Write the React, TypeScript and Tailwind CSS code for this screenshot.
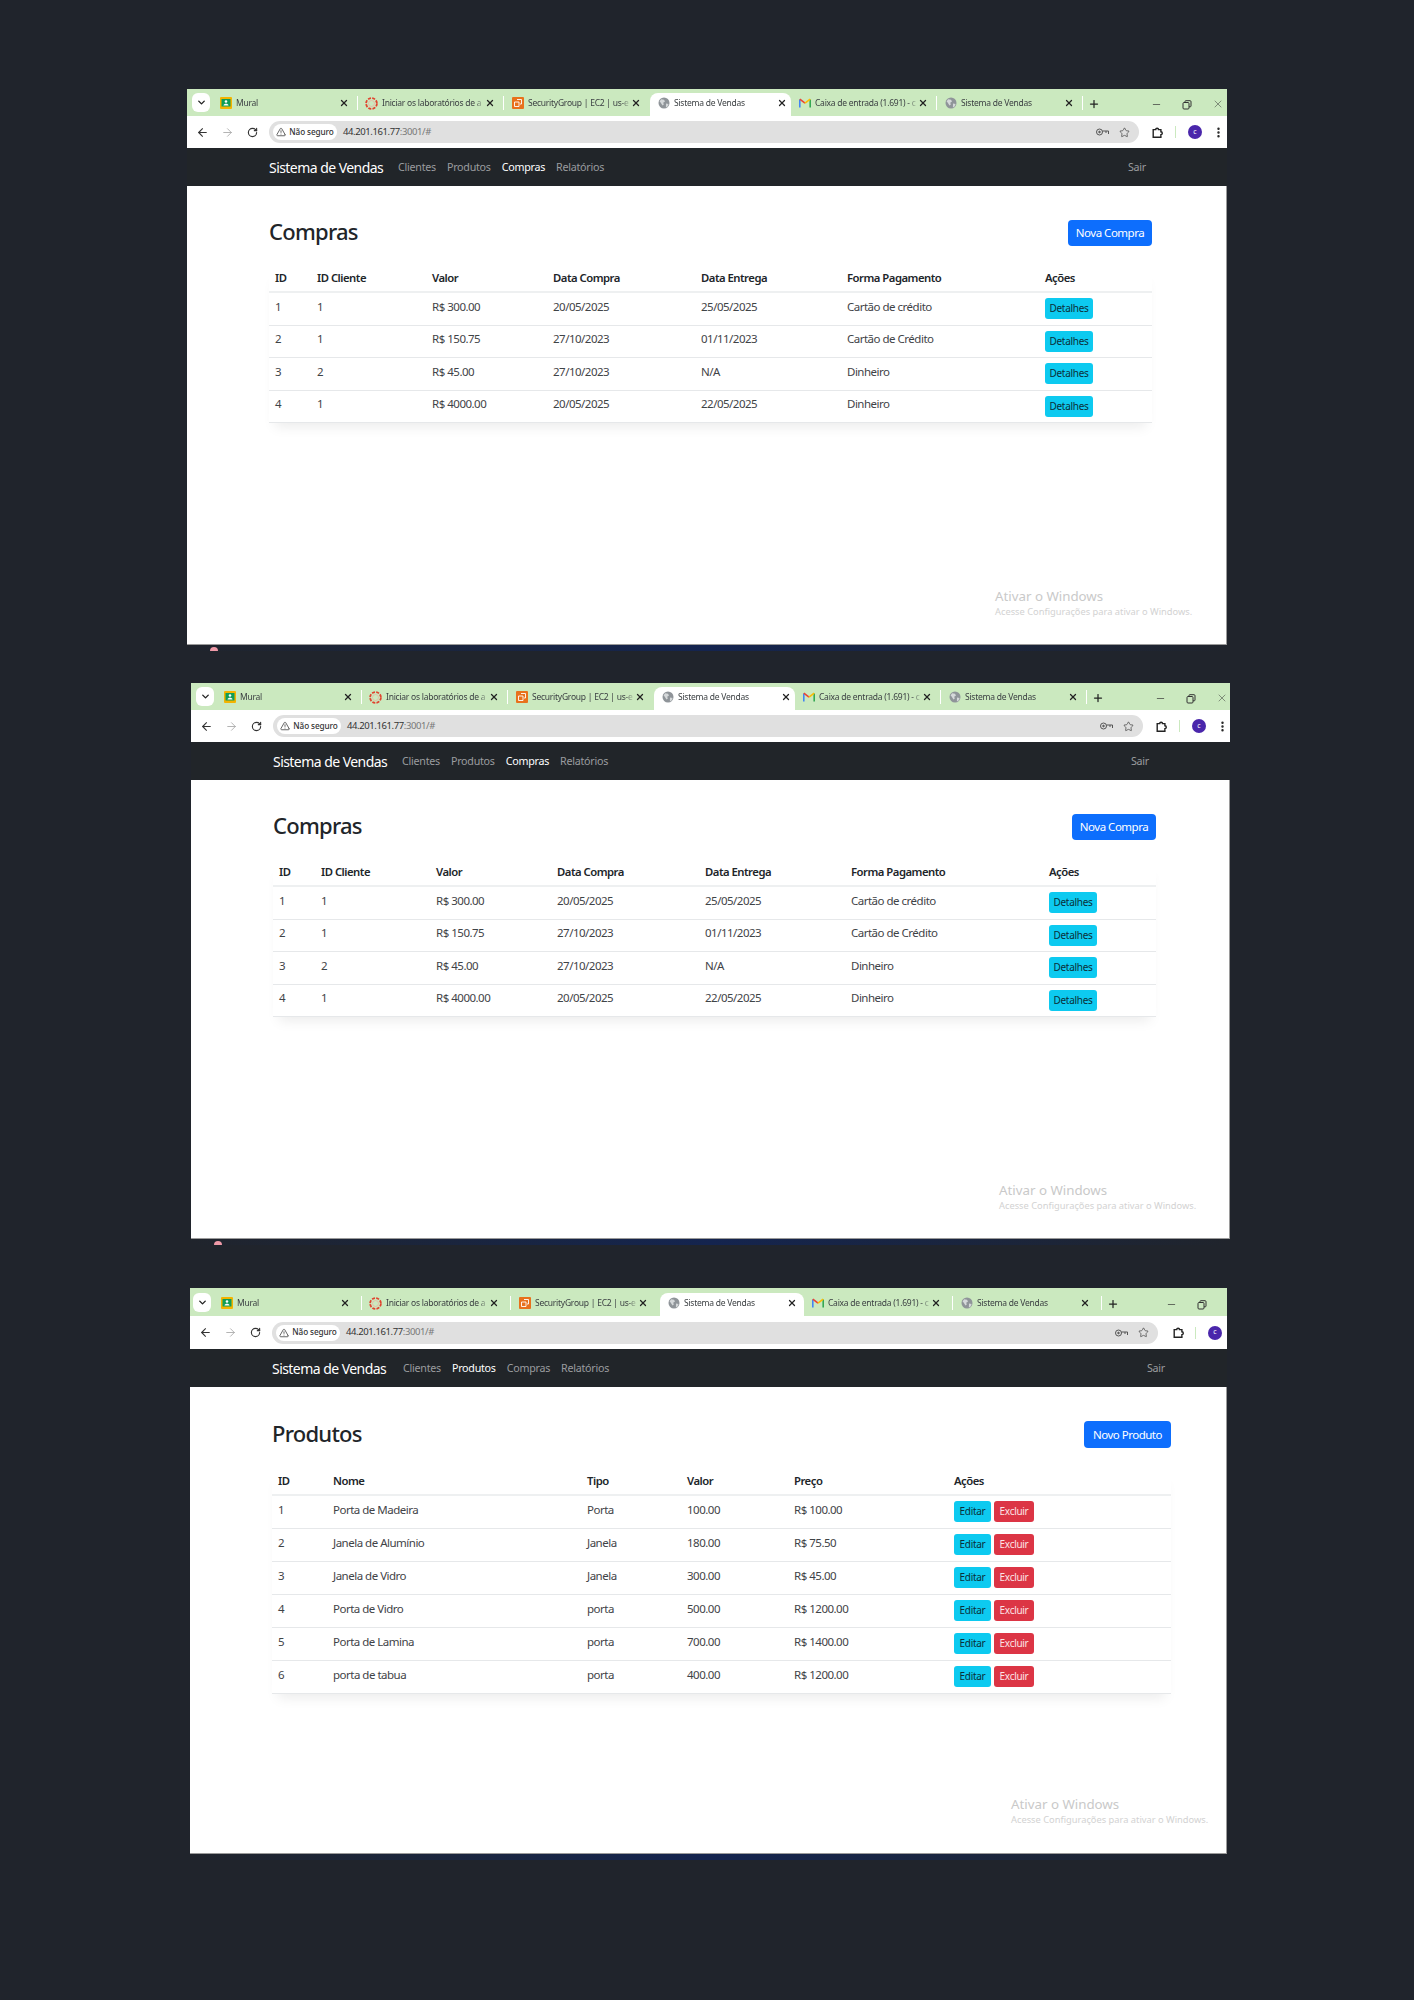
import React from 'react';
import { ArrowLeft, ArrowRight, RotateCw, TriangleAlert, Star, EllipsisVertical, ChevronDown, X, Plus, Minus } from 'lucide-react';

type Favicon = 'classroom' | 'canvas' | 'aws' | 'globe' | 'gmail';

const TabIcon: React.FC<{ kind: Favicon }> = ({ kind }) => {
    if (kind === 'classroom') {
        return (
            <svg width="12" height="12" viewBox="0 0 12 12">
                <rect width="12" height="12" rx="1" fill="#f4b400" />
                <rect x="1.5" y="2" width="9" height="7.5" fill="#0f9d58" />
                <circle cx="6" cy="4.5" r="1.3" fill="#fff" />
                <path d="M3.5 8.5c0-2.4 5-2.4 5 0z" fill="#fff" />
            </svg>
        );
    }
    if (kind === 'canvas') {
        return (
            <svg width="13" height="13" viewBox="0 0 13 13" fill="none">
                <circle cx="6.5" cy="6.5" r="5.4" stroke="#e0442f" strokeWidth="1.8" strokeDasharray="3 1.25" />
                <circle cx="6.5" cy="6.5" r="3" stroke="#f2a59b" strokeWidth="0.6" />
            </svg>
        );
    }
    if (kind === 'aws') {
        return (
            <svg width="12" height="12" viewBox="0 0 12 12" fill="none">
                <rect width="12" height="12" rx="1" fill="#e8711c" />
                <path d="M5 2.5h4.5v4.5H8M2.5 5H7v4.5H2.5z" stroke="#fff" strokeWidth="0.9" />
            </svg>
        );
    }
    if (kind === 'gmail') {
        return (
            <svg width="12" height="10" viewBox="0 0 12 10" fill="none">
                <path d="M0.8 9.5V1.5" stroke="#4285f4" strokeWidth="1.6" />
                <path d="M11.2 9.5V1.5" stroke="#34a853" strokeWidth="1.6" />
                <path d="M0.8 1.2L6 5.2" stroke="#ea4335" strokeWidth="1.6" />
                <path d="M6 5.2L11.2 1.2" stroke="#fbbc04" strokeWidth="1.6" />
            </svg>
        );
    }
    return (
        <svg width="12" height="12" viewBox="0 0 12 12">
            <circle cx="6" cy="6" r="5.5" fill="#8f9499" />
            <path d="M3 2.2l3 .6 1 1.6-1.8 1.4.6 1.8-1.3.8L2.6 5.6 1.6 4.4zM8 6.5l2.6.4-1 2.6-1.7 1z" fill="#d5d8da" />
        </svg>
    );
};

const TABS: { icon: Favicon; title: string }[] = [
    { icon: 'classroom', title: 'Mural' },
    { icon: 'canvas', title: 'Iniciar os laboratórios de a' },
    { icon: 'aws', title: 'SecurityGroup | EC2 | us-e' },
    { icon: 'globe', title: 'Sistema de Vendas' },
    { icon: 'gmail', title: 'Caixa de entrada (1.691) - c' },
    { icon: 'globe', title: 'Sistema de Vendas' },
];

const TabStrip: React.FC<{ wide: boolean }> = ({ wide }) => (
    <div className={`flex items-end bg-[#cbe9bf] ${wide ? 'h-[28px] pl-[3px]' : 'h-[27px] pl-[5px]'}`}>
        <div className="mb-[4px] mr-[2px] flex h-[19px] w-[18px] items-center justify-center rounded-[6px] bg-white">
            <ChevronDown size={11} strokeWidth={3} color="#222" />
        </div>
        {TABS.map((tab, i) => {
            const active = i === 3;
            return (
                <div
                    key={i}
                    className={`flex h-[23px] items-center pb-[3px] pl-[7px] ${active ? 'rounded-t-[8px] bg-white' : ''} ${
                        wide ? (active ? 'w-[144px]' : 'w-[149px]') : active ? 'w-[141px]' : 'w-[146px]'
                    }`}
                >
                    <div className="flex w-[13px] shrink-0 justify-center">
                        <TabIcon kind={tab.icon} />
                    </div>
                    <span className="ml-[4px] w-[103px] shrink-0 overflow-hidden whitespace-nowrap text-[8.5px] tracking-[-0.25px] text-[#3c4043] [mask-image:linear-gradient(to_right,black_90%,transparent)]">
                        {tab.title}
                    </span>
                    <X size={10} strokeWidth={3} color="#222" className="shrink-0" />
                    {!active && i !== 2 && <div className="ml-auto h-[14px] w-[1px] bg-white" />}
                </div>
            );
        })}
        <div className="mb-[6px] ml-[5px] flex w-[12px] justify-center">
            <Plus size={12} strokeWidth={2.5} color="#222" />
        </div>
        <div className={`mb-[6px] flex w-[12px] justify-center ${wide ? 'ml-[46px]' : 'ml-[50px]'}`}>
            <Minus size={11} strokeWidth={1.5} color="#333" />
        </div>
        <div className="mb-[6px] ml-[19px] flex w-[12px] justify-center">
            <svg width="10" height="10" viewBox="0 0 10 10" fill="none" stroke="#333">
                <rect x="1" y="2.5" width="6" height="6.5" rx="1" />
                <path d="M3 2.5V1.5a.8.8 0 0 1 .8-.8H8a1 1 0 0 1 1 1V6a.8.8 0 0 1-.8.8H7" />
            </svg>
        </div>
        {!wide && (
            <div className="mb-[6px] ml-[19px] flex w-[12px] justify-center">
                <X size={12} strokeWidth={1} color="#333" />
            </div>
        )}
    </div>
);

const Toolbar: React.FC<{ wide: boolean }> = ({ wide }) => (
    <div className={`flex items-center bg-white pl-[3px] ${wide ? 'h-[33px]' : 'h-[32px]'}`}>
        <div className="flex w-[24px] justify-center">
            <ArrowLeft size={13} strokeWidth={2} color="#333" />
        </div>
        <div className="ml-[1px] flex w-[24px] justify-center">
            <ArrowRight size={13} strokeWidth={1.5} color="#a3a3a3" />
        </div>
        <div className="ml-[1px] flex w-[24px] justify-center">
            <RotateCw size={11} strokeWidth={2.5} color="#333" />
        </div>
        <div className={`ml-[5px] flex h-[22px] items-center justify-between rounded-full bg-[#e0e0e0] pl-[4px] pr-[9px] ${wide ? 'w-[886px]' : 'w-[870px]'}`}>
            <div className="flex items-center">
                <div className="flex h-[16px] w-[64px] items-center justify-center gap-[3px] rounded-full bg-white">
                    <TriangleAlert size={10} strokeWidth={1.8} color="#333" />
                    <span className="text-[8.2px] font-medium tracking-[-0.1px] text-[#333]">Não seguro</span>
                </div>
                <span className="ml-[6px] text-[9.5px] tracking-[-0.4px] text-[#333]">
                    44.201.161.77<span className="text-[#777]">:3001/#</span>
                </span>
            </div>
            <div className="flex items-center gap-[10px]">
                <svg width="13" height="8" viewBox="0 0 13 8" fill="none" stroke="#555" strokeWidth="1">
                    <circle cx="3.5" cy="4" r="3" />
                    <circle cx="3.5" cy="4" r="0.8" fill="#555" />
                    <path d="M6.5 3h6v3M10 3v2" />
                </svg>
                <Star size={11} strokeWidth={1.6} color="#444" />
            </div>
        </div>
        <div className={`flex w-[24px] justify-center ${wide ? 'ml-[8px]' : 'ml-[6px]'}`}>
            <svg width="13" height="13" viewBox="0 0 13 13" fill="none" stroke="#222" strokeWidth="1.4">
                <path d="M2.2 3.6h2.5a1.4 1.4 0 1 1 2.8 0h2.4v2.2a1.4 1.4 0 1 1 0 2.8v2.7H2.2z" />
            </svg>
        </div>
        <div className={`h-[12px] w-[1px] bg-[#cbe9bf] ${wide ? 'ml-[5px]' : 'ml-[6px]'}`} />
        <div className="ml-[12px] flex h-[14px] w-[14px] items-center justify-center rounded-full bg-[#4a26ab] text-[7px] text-white">c</div>
        {!wide && <EllipsisVertical size={13} strokeWidth={2.5} color="#222" className="ml-[10px]" />}
    </div>
);

const Navbar: React.FC<{ active: string; wide: boolean }> = ({ active, wide }) => (
    <div className={`flex h-[38px] items-center justify-between bg-[#212529] pl-[82px] pt-[1px] ${wide ? 'pr-[62px]' : 'pr-[81px]'}`}>
        <div className="flex items-center">
            <span className={`whitespace-nowrap text-[14px] tracking-[-0.55px] text-white ${wide ? 'w-[131px]' : 'w-[129px]'}`}>Sistema de Vendas</span>
            <div className="flex items-center gap-[11px] text-[10.7px] tracking-[-0.25px]">
                {['Clientes', 'Produtos', 'Compras', 'Relatórios'].map(link => (
                    <span key={link} className={link === active ? 'text-white' : 'text-[#9a9c9f]'}>
                        {link}
                    </span>
                ))}
            </div>
        </div>
        <span className="text-[10.7px] tracking-[-0.25px] text-[#9a9c9f]">Sair</span>
    </div>
);

const BTN = 'inline-flex h-[21px] items-center justify-center rounded-[3px] text-[10px] tracking-[-0.3px]';

const ActivationNotice: React.FC<{ wide: boolean }> = ({ wide }) => (
    <div className={`absolute text-[#c9c9c9] ${wide ? 'left-[821px] top-[408px]' : 'left-[808px] top-[401px]'}`}>
        <p className="text-[13.3px] leading-[18px]">Ativar o Windows</p>
        <p className="text-[9.3px] leading-[14px] text-[#d2d2d2]">Acesse Configurações para ativar o Windows.</p>
    </div>
);

const COMPRAS = [
    ['1', '1', 'R$ 300.00', '20/05/2025', '25/05/2025', 'Cartão de crédito'],
    ['2', '1', 'R$ 150.75', '27/10/2023', '01/11/2023', 'Cartão de Crédito'],
    ['3', '2', 'R$ 45.00', '27/10/2023', 'N/A', 'Dinheiro'],
    ['4', '1', 'R$ 4000.00', '20/05/2025', '22/05/2025', 'Dinheiro'],
];

const PRODUTOS = [
    ['1', 'Porta de Madeira', 'Porta', '100.00', 'R$ 100.00'],
    ['2', 'Janela de Alumínio', 'Janela', '180.00', 'R$ 75.50'],
    ['3', 'Janela de Vidro', 'Janela', '300.00', 'R$ 45.00'],
    ['4', 'Porta de Vidro', 'porta', '500.00', 'R$ 1200.00'],
    ['5', 'Porta de Lamina', 'porta', '700.00', 'R$ 1400.00'],
    ['6', 'porta de tabua', 'porta', '400.00', 'R$ 1200.00'],
];

const TH = 'border-b-2 border-[#eef0f1] px-[6px] text-left align-middle text-[11.3px] font-semibold tracking-[-0.5px] text-[#212529]';
const TD = 'border-b border-[#e6e8ea] px-[6px] align-middle text-[11.5px] tracking-[-0.5px] text-[#3f4347]';
const TABLE_SHADOW = 'shadow-[0_10px_12px_-6px_rgba(0,0,0,0.08)]';

const PageHeader: React.FC<{ title: string; action: string; wide: boolean }> = ({ title, action, wide }) => (
    <div className={`mb-[20px] flex items-center justify-between ${wide ? 'h-[27px]' : 'h-[26px]'}`}>
        <h2 className="mb-[4px] text-[22px] font-medium leading-[22px] tracking-[-0.75px] text-[#212529]">{title}</h2>
        <button className={`rounded-[4px] bg-[#0d6efd] text-[11.5px] tracking-[-0.5px] text-white ${wide ? 'w-[87px]' : 'w-[84px]'} h-full`}>{action}</button>
    </div>
);

const ComprasPage: React.FC = () => (
    <div className="w-[883px]">
        <PageHeader title="Compras" action="Nova Compra" wide={false} />
        <table className={`w-[883px] table-fixed border-collapse ${TABLE_SHADOW}`}>
            <thead>
                <tr className="h-[26px]">
                    <th className={`${TH} w-[42px]`}>ID</th>
                    <th className={`${TH} w-[115px]`}>ID Cliente</th>
                    <th className={`${TH} w-[121px]`}>Valor</th>
                    <th className={`${TH} w-[148px]`}>Data Compra</th>
                    <th className={`${TH} w-[146px]`}>Data Entrega</th>
                    <th className={`${TH} w-[198px]`}>Forma Pagamento</th>
                    <th className={`${TH} w-[113px]`}>Ações</th>
                </tr>
            </thead>
            <tbody>
                {COMPRAS.map((row, index) => (
                    <tr key={row[0]} className={index % 2 === 0 ? 'h-[33px]' : 'h-[32px]'}>
                        {row.map((cell, i) => (
                            <td key={i} className={TD}>
                                <span className="relative -top-[2px]">{cell}</span>
                            </td>
                        ))}
                        <td className={TD}>
                            <button className={`${BTN} w-[48px] bg-[#0dcaf0] text-[#0b2f38]`}>Detalhes</button>
                        </td>
                    </tr>
                ))}
            </tbody>
        </table>
    </div>
);

const ProdutosPage: React.FC = () => (
    <div className="w-[899px]">
        <PageHeader title="Produtos" action="Novo Produto" wide={true} />
        <table className={`w-[899px] table-fixed border-collapse ${TABLE_SHADOW}`}>
            <thead>
                <tr className="h-[27px]">
                    <th className={`${TH} w-[55px]`}>ID</th>
                    <th className={`${TH} w-[254px]`}>Nome</th>
                    <th className={`${TH} w-[100px]`}>Tipo</th>
                    <th className={`${TH} w-[107px]`}>Valor</th>
                    <th className={`${TH} w-[160px]`}>Preço</th>
                    <th className={`${TH} w-[223px]`}>Ações</th>
                </tr>
            </thead>
            <tbody>
                {PRODUTOS.map(row => (
                    <tr key={row[0]} className="h-[33px]">
                        {row.map((cell, i) => (
                            <td key={i} className={TD}>
                                <span className="relative -top-[2px]">{cell}</span>
                            </td>
                        ))}
                        <td className={TD}>
                            <div className="flex gap-[3px]">
                                <button className={`${BTN} w-[37px] bg-[#0dcaf0] text-[#0b2f38]`}>Editar</button>
                                <button className={`${BTN} w-[40px] bg-[#dc3545] text-[#fbe4e6]`}>Excluir</button>
                            </div>
                        </td>
                    </tr>
                ))}
            </tbody>
        </table>
    </div>
);

const BrowserWindow: React.FC<{ active: string; wide?: boolean; className: string; children: React.ReactNode }> = ({ active, wide = false, className, children }) => (
    <div className={className}>
        <TabStrip wide={wide} />
        <Toolbar wide={wide} />
        <Navbar active={active} wide={wide} />
        <main className={`relative border-b border-r border-[#9a9a9a] bg-white pl-[82px] pt-[34px] ${wide ? 'h-[467px]' : 'h-[459px]'}`}>
            {children}
            <ActivationNotice wide={wide} />
        </main>
        <div className="relative h-[6px] bg-gradient-to-r from-[#20242c] via-[#14244f] to-[#20242c]">
            {!wide && <div className="absolute left-[23px] top-[2px] h-[4px] w-[8px] rounded-t-full bg-[#ef9aa8]" />}
        </div>
    </div>
);

const App: React.FC = () => (
    <div className="min-h-[2000px] bg-[#20242c] pt-[89px] font-['Noto_Sans',sans-serif]">
        <BrowserWindow active="Compras" className="ml-[187px] w-[1040px]">
            <ComprasPage />
        </BrowserWindow>
        <BrowserWindow active="Compras" className="ml-[191px] mt-[32px] w-[1039px]">
            <ComprasPage />
        </BrowserWindow>
        <BrowserWindow active="Produtos" wide className="ml-[190px] mt-[43px] w-[1037px]">
            <ProdutosPage />
        </BrowserWindow>
    </div>
);

export default App;
